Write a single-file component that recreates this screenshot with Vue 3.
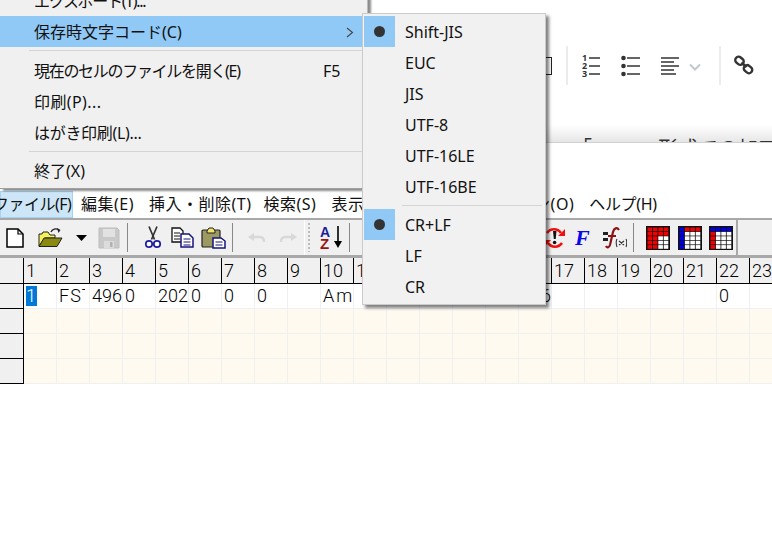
<template>
  <div class="app">
    <!-- browser page behind the window -->
    <div class="page">
      <div class="page-tools">
        <span class="box"></span>
        <span class="page-sep"></span>
        <svg class="ic-ol" width="20" height="26" viewBox="0 0 20 26">
          <path d="M7 5h11M7 13h11M7 21h11" stroke="#333" stroke-width="1.6" />
          <text x="0" y="8" class="num">1</text>
          <text x="0" y="16" class="num">2</text>
          <text x="0" y="24" class="num">3</text>
        </svg>
        <svg class="ic-ul" width="19" height="26" viewBox="0 0 19 26">
          <path d="M6 5h13M6 13h13M6 21h13" stroke="#333" stroke-width="1.6" />
          <circle cx="2.5" cy="5" r="2.3" fill="#333" />
          <circle cx="2.5" cy="13" r="2.3" fill="#333" />
          <circle cx="2.5" cy="21" r="2.3" fill="#333" />
        </svg>
        <svg class="ic-al" width="18" height="20" viewBox="0 0 18 20">
          <path d="M0 2h18M0 6h13M0 10h18M0 14h13M0 18h15" stroke="#333" stroke-width="1.5" />
        </svg>
        <svg class="ic-ch" width="12" height="8" viewBox="0 0 12 8">
          <path d="M1 1.5l5 5 5-5" fill="none" stroke="#c4c8cc" stroke-width="2" />
        </svg>
        <span class="page-sep sep2"></span>
        <svg class="ic-link" width="20" height="20" viewBox="0 0 20 20">
          <g fill="none" stroke="#333" stroke-width="2.4">
            <rect x="1" y="2.5" width="9" height="6.6" rx="3.3" transform="rotate(40 5.5 5.8)" />
            <rect x="9.6" y="10.8" width="9" height="6.6" rx="3.3" transform="rotate(40 14 14)" />
            <path d="M7.5 7.5l5 4.6" />
          </g>
        </svg>
      </div>
      <div class="page-fade"><span>「CRLF」形式での加工</span></div>
    </div>
    <div class="gap"></div>

    <!-- editor window -->
    <nav class="menubar">
      <span class="mb active"><span class="tight">ファイル(F)</span></span>
      <span class="mb m-edit">編集(E)</span>
      <span class="mb m-ins">挿入・削除(T)</span>
      <span class="mb m-find">検索(S)</span>
      <span class="mb m-view">表示(V)</span>
      <span class="mb m-opt">オプション(O)</span>
      <span class="mb m-help">ヘルプ(H)</span>
    </nav>

    <div class="toolbar">
      <div class="band band1">
        <svg class="t-new" width="18" height="20" viewBox="0 0 18 20">
          <path d="M1 1h11l5 5v13H1z" fill="#fff" stroke="#000" stroke-width="1.5" />
          <path d="M12 1v5h5" fill="none" stroke="#000" stroke-width="1.2" />
        </svg>
        <svg class="t-open" width="25" height="20" viewBox="0 0 25 20">
          <path d="M13 4c1-3 5-4 8-2" fill="none" stroke="#222" stroke-width="1.3" />
          <path d="M19 0l3.5 2-2 3z" fill="#222" />
          <path d="M1 18V6h3l1-2h5l2 3h5v3H7z" fill="#f6f05a" stroke="#222" />
          <path d="M1 18.5L6 10h18l-5 8.5z" fill="#8a8a12" stroke="#222" />
        </svg>
        <svg class="t-drop" width="11" height="6" viewBox="0 0 11 6"><path d="M0 0h11L5.5 6z" fill="#000" /></svg>
        <svg class="t-save" width="22" height="22" viewBox="0 0 22 22">
          <path d="M1 1h18l2 2v18H1z" fill="#c9c9c9" stroke="#bdbdbd" />
          <rect x="5" y="2" width="12" height="8" fill="#e2e2e2" />
          <rect x="6" y="14" width="10" height="7" fill="#dcdcdc" />
          <rect x="12" y="15" width="2.5" height="5" fill="#b2b2b2" />
        </svg>
        <span class="t-sep s1"></span>
        <svg class="t-cut" width="16" height="23" viewBox="0 0 16 23">
          <path d="M4 0.5l5.5 13M12 0.5L6.500 13.500" stroke="#333" stroke-width="1.7" fill="none" />
          <circle cx="4" cy="18" r="3.2" fill="#fff" stroke="#1c1c9c" stroke-width="1.7" />
          <circle cx="12" cy="18" r="3.2" fill="#fff" stroke="#1c1c9c" stroke-width="1.7" />
        </svg>
        <svg class="t-copy" width="23" height="21" viewBox="0 0 23 21">
          <path d="M1 1h8l3 3v11H1z" fill="#fff" stroke="#111" stroke-width="1.3" />
          <path d="M3 6h6M3 9h6M3 12h6" stroke="#111" />
          <path d="M10 7h8l4 4v9H10z" fill="#fff" stroke="#14147c" stroke-width="1.5" />
          <path d="M12.500 12h7M12.500 15h7M12.500 18h7" stroke="#14147c" />
        </svg>
        <svg class="t-paste" width="25" height="22" viewBox="0 0 25 22">
          <rect x="1" y="3" width="18" height="17" rx="1" fill="#9c9a62" stroke="#222" stroke-width="1.2" />
          <path d="M6 4l2-3h4l2 3v2H6z" fill="#f2e36a" stroke="#222" />
          <path d="M12 11h8l4 3v7H12z" fill="#fff" stroke="#14147c" stroke-width="1.5" />
          <path d="M14.500 15h7M14.500 18h7" stroke="#14147c" />
        </svg>
        <span class="t-sep s2"></span>
        <svg class="t-undo" width="18" height="10" viewBox="0 0 18 10">
          <path d="M6 4h6c3 0 4 2 4 5" fill="none" stroke="#d8d8d8" stroke-width="2.4" />
          <path d="M0 4l6-4v8z" fill="#d8d8d8" />
        </svg>
        <svg class="t-redo" width="18" height="10" viewBox="0 0 18 10">
          <path d="M12 4H6C3 4 2 6 2 9" fill="none" stroke="#d8d8d8" stroke-width="2.4" />
          <path d="M18 4l-6-4v8z" fill="#d8d8d8" />
        </svg>
      </div>
      <div class="band band2">
        <span class="grip"></span>
        <svg class="t-sort" width="23" height="23" viewBox="0 0 23 23">
          <text x="0" y="11" class="az a">A</text>
          <text x="0" y="22.500" class="az z">Z</text>
          <path d="M18 0v17" stroke="#000" stroke-width="1.6" />
          <path d="M14 15h8l-4 7z" fill="#000" />
        </svg>
        <span class="t-sep s3"></span>
        <svg class="t-recalc" width="21" height="22" viewBox="0 0 21 22">
          <path d="M3 6a8.500 8.500 0 0 1 14 0M18 16a8.500 8.500 0 0 1-14 0" fill="none" stroke="#f01010" stroke-width="2.600" />
          <path d="M21 2v7h-7zM0 20v-7h7z" fill="#f01010" />
          <path d="M9 4h3.500l-.8 8H9.800z" fill="#111" />
          <circle cx="10.600" cy="15.500" r="1.800" fill="#111" />
        </svg>
        <span class="t-f">F</span>
        <svg class="t-fx" width="25" height="24" viewBox="0 0 25 24">
          <path d="M1 6h5v3H1zM1 12h5v3H1z" fill="#222" />
          <path d="M17 4c-2-3-5-2-6 2L8 19c-1 3-3 3-4 1M6 10h8" fill="none" stroke="#8a1414" stroke-width="2.200" />
          <path d="M15 13c-1 2-1 5 0 8M24 13c1 2 1 5 0 8M17 15l5 4M22 15l-5 4" fill="none" stroke="#333" stroke-width="1.100" />
        </svg>
        <span class="t-sep s4"></span>
        <svg v-for="(t, i) in tables" :key="i" class="t-table" :class="'tb' + i" width="24" height="24" viewBox="0 0 24 24">
          <rect width="24" height="24" fill="#111" />
          <template v-for="c in t" :key="c.k">
            <rect :x="c.x" :y="c.y" width="4.600" height="3.700" :fill="c.fill" />
          </template>
        </svg>
      </div>
    </div>

    <div class="sheet">
      <div class="hcell corner"></div>
      <div v-for="n in 23" :key="n" class="hcell">{{ n }}</div>

      <div class="rowhead"></div>
      <div v-for="(v, i) in firstRow" :key="'d' + i" class="cell">
        <span :class="{ sel: i === 0, fst: i === 1, wide: i === 9 }">{{ v }}</span>
      </div>

      <template v-for="r in 3" :key="r">
        <div class="rowhead"></div>
        <div v-for="n in 23" :key="n" class="cell empty"></div>
      </template>
    </div>

    <!-- open file menu -->
    <div class="menu">
      <div class="item kana">エクスポート(T)...</div>
      <div class="item hot">
        保存時文字コード(C)
        <svg class="arrow" width="8" height="11" viewBox="0 0 8 11">
          <path d="M1 1l5.500 4.500L1 10" fill="none" stroke="#444" stroke-width="1.100" />
        </svg>
      </div>
      <div class="rule"></div>
      <div class="item"><span class="kana">現在のセルのファイルを開く(E)</span><span class="key">F5</span></div>
      <div class="item loose">印刷(P)...</div>
      <div class="item kana2">はがき印刷(L)...</div>
      <div class="rule"></div>
      <div class="item">終了(X)</div>
    </div>

    <!-- encoding submenu -->
    <div class="submenu">
      <template v-for="(s, i) in subItems" :key="i">
        <div v-if="s.rule" class="subrule"></div>
        <div v-else class="subitem">
          <span class="mark" :class="{ on: s.on }"><i v-if="s.on"></i></span>
          {{ s.label }}
        </div>
      </template>
    </div>
  </div>
</template>

<script setup>
const firstRow = ["1", "FST", "496", "0", "202", "0", "0", "0", "", "Am", "", "", "", "", "", "136", "", "", "", "", "", "0", ""];

const subItems = [
  { label: "Shift-JIS", on: true },
  { label: "EUC" },
  { label: "JIS" },
  { label: "UTF-8" },
  { label: "UTF-16LE" },
  { label: "UTF-16BE" },
  { rule: true },
  { label: "CR+LF", on: true },
  { label: "LF" },
  { label: "CR" },
];

// the three little table icons: which cells are coloured
const makeTable = (paint) => {
  const cells = [];
  for (let r = 0; r < 5; r++) {
    for (let c = 0; c < 4; c++) {
      cells.push({ k: r + "-" + c, x: 1.5 + c * 5.4, y: 1.5 + r * 4.4, fill: paint(r, c) });
    }
  }
  return cells;
};

const tables = [
  makeTable((r, c) => (r < 2 || c < 2 ? "#f00000" : "#fff")),
  makeTable((r, c) => (c === 0 ? "#0000e0" : r === 0 ? "#f00000" : "#fff")),
  makeTable((r, c) => (r === 0 ? "#0000e0" : c === 0 ? "#f00000" : "#fff")),
];
</script>

<style scoped>
.app {
  position: relative;
  width: 772px;
  height: 534px;
  overflow: hidden;
  background: #fff;
  font-family: "Noto Sans", "Noto Sans CJK JP", sans-serif;
  font-size: 16px;
  color: #111;
}

.page {
  height: 143px;
  display: flex;
  flex-direction: column;
  justify-content: space-between;
}
.page-tools {
  display: flex;
  align-items: center;
  height: 39px;
  margin-top: 46px;
  padding-left: 533px;
}
.box {
  width: 19px;
  height: 18px;
  border: 1px solid #222;
  box-sizing: border-box;
}
.page-sep {
  width: 2px;
  height: 39px;
  background: #ececec;
  margin-left: 14px;
}
.ic-ol { margin-left: 14px; }
.ic-ul { margin-left: 19px; }
.ic-al { margin-left: 21px; }
.ic-ch { margin-left: 10px; margin-top: 2px; }
.sep2 { margin-left: 18px; }
.ic-link { margin-left: 13px; margin-top: -1px; }
.num {
  font: 700 9px "Noto Sans", sans-serif;
  fill: #333;
}
.page-fade {
  height: 18px;
  overflow: hidden;
  padding-left: 572px;
  background: linear-gradient(#fff, #e6e6e6);
  border-bottom: 1px solid #d0d0d0;
  box-sizing: border-box;
  color: #333;
  font-size: 20px;
  line-height: 26px;
  padding-top: 11px;
  white-space: nowrap;
}
.gap { height: 47px; }

.menubar {
  height: 28px;
  display: flex;
  align-items: center;
  white-space: nowrap;
  overflow: hidden;
  letter-spacing: 0.5px;
}
.mb { line-height: 27px; }
.active {
  width: 73px;
  background: #cde6f7;
  box-shadow: inset 0 0 0 1px #a6d2f2;
  text-indent: -7px;
  overflow: hidden;
}
.tight { letter-spacing: -0.5px; }
.m-edit { margin-left: 8px; }
.m-ins { margin-left: 15px; }
.m-find { margin-left: 12px; }
.m-view { margin-left: 15px; }
.m-opt { margin-left: 83px; }
.m-help { margin-left: 15px; letter-spacing: -0.3px; }

.toolbar {
  height: 40px;
  display: flex;
  background: #f0f0f0;
  border-top: 2px solid #a8a8a8;
  border-bottom: 3px solid #a8a8a8;
  box-sizing: border-box;
}
.band {
  display: flex;
  align-items: center;
  height: 100%;
}
.band1 {
  width: 304px;
  border-right: 1px solid #fff;
  flex: none;
}
.band2 {
  width: 433px;
  flex: none;
  border-right: 2px solid #a8a8a8;
  box-sizing: border-box;
}
.t-new { margin-left: 6px; }
.t-open { margin-left: 14px; }
.t-drop { margin-left: 13px; }
.t-save { margin-left: 11px; }
.t-sep {
  width: 1px;
  height: 29px;
  background: #888;
  flex: none;
}
.s1 { margin-left: 7px; }
.t-cut { margin-left: 17px; }
.t-copy { margin-left: 10px; }
.t-paste { margin-left: 7px; }
.s2 { margin-left: 6px; }
.t-undo { margin-left: 15px; }
.t-redo { margin-left: 13px; }
.grip {
  width: 2px;
  height: 29px;
  margin-left: 3px;
  background: repeating-linear-gradient(#bdbdbd 0 2px, transparent 2px 4px);
}
.t-sort { margin-left: 10px; }
.az {
  font: 700 14px "Liberation Sans", sans-serif;
}
.az.a { fill: #1c1c9c; }
.az.z { fill: #961414; font-size: 15px; }
.s3 { margin-left: 6px; }
.t-recalc { margin-left: 194px; }
.t-f {
  margin-left: 10px;
  width: 18px;
  font: italic 700 22px "Liberation Serif", serif;
  color: #0808ee;
}
.t-fx { margin-left: 9px; }
.s4 { margin-left: 6px; }
.t-table { flex: none; }
.tb0 { margin-left: 12px; }
.tb1 { margin-left: 8px; }
.tb2 { margin-left: 7px; }

.sheet {
  display: grid;
  grid-template-columns: 24px repeat(23, 33px);
  grid-template-rows: 26px repeat(4, 25px);
  width: 772px;
  overflow: hidden;
  font-family: Roboto, "Liberation Sans", sans-serif;
  font-weight: 300;
  font-size: 18px;
  color: #000;
}
.hcell {
  background: #f0f0f0;
  border-right: 1px solid #000;
  border-bottom: 1px solid #000;
  box-sizing: border-box;
  padding-left: 2px;
  line-height: 26px;
  overflow: hidden;
  white-space: nowrap;
}
.rowhead {
  background: #f0f0f0;
  border-right: 1px solid #000;
  border-bottom: 1px solid #000;
  box-sizing: border-box;
}
.cell {
  border-right: 1px solid #f0f0f0;
  border-bottom: 1px solid #f0f0f0;
  box-sizing: border-box;
  padding-left: 2px;
  line-height: 24px;
  overflow: hidden;
  white-space: nowrap;
}
.cell.empty { background: #fefaf0; }
.wide { letter-spacing: 2px; }
.fst {
  display: inline-block;
  width: 26px;
  overflow: hidden;
  vertical-align: top;
  letter-spacing: 1px;
}
.sel {
  display: inline-block;
  width: 11px;
  height: 20px;
  margin-top: 2px;
  line-height: 20px;
  vertical-align: top;
  background: #0078d7;
  color: #fff;
}

.menu {
  position: absolute;
  left: 0;
  top: -15px;
  width: 367px;
  height: 203px;
  background: #f0f0f0;
  border-right: 1px solid #bbb;
  border-bottom: 1px solid #a0a0a0;
  box-shadow: 3px 2px 2px rgba(0, 0, 0, 0.45);
}
.item {
  position: relative;
  height: 31px;
  line-height: 33px;
  padding-left: 34px;
  white-space: nowrap;
}
.kana { letter-spacing: -1.3px; }
.kana2 { letter-spacing: -0.3px; }
.loose { letter-spacing: 0.4px; }
.hot { background: #90c8f6; width: 333px; }
.arrow {
  position: absolute;
  left: 346px;
  top: 11px;
}
.key {
  position: absolute;
  left: 323px;
  letter-spacing: 0;
}
.rule {
  height: 1px;
  margin: 3px 0 3.500px 29px;
  background: #d4d4d4;
  width: 333px;
}

.submenu {
  position: absolute;
  left: 362px;
  top: 13px;
  width: 184px;
  height: 292px;
  box-sizing: border-box;
  padding: 2px 0 0 1px;
  background: #f1f1f1;
  border: 1px solid #cbcbcb;
  box-shadow: 3px 3px 3px rgba(0, 0, 0, 0.5);
}
.subitem {
  display: flex;
  align-items: center;
  height: 31px;
  white-space: nowrap;
}
.mark {
  display: flex;
  align-items: center;
  justify-content: center;
  width: 31px;
  height: 31px;
  margin-right: 10px;
  flex: none;
}
.mark.on { background: #90c8f6; }
.mark i {
  width: 11px;
  height: 11px;
  border-radius: 50%;
  background: #333;
}
.subrule {
  height: 1px;
  margin: 3px 3px 3px 38px;
  background: #d4d4d4;
}
</style>
